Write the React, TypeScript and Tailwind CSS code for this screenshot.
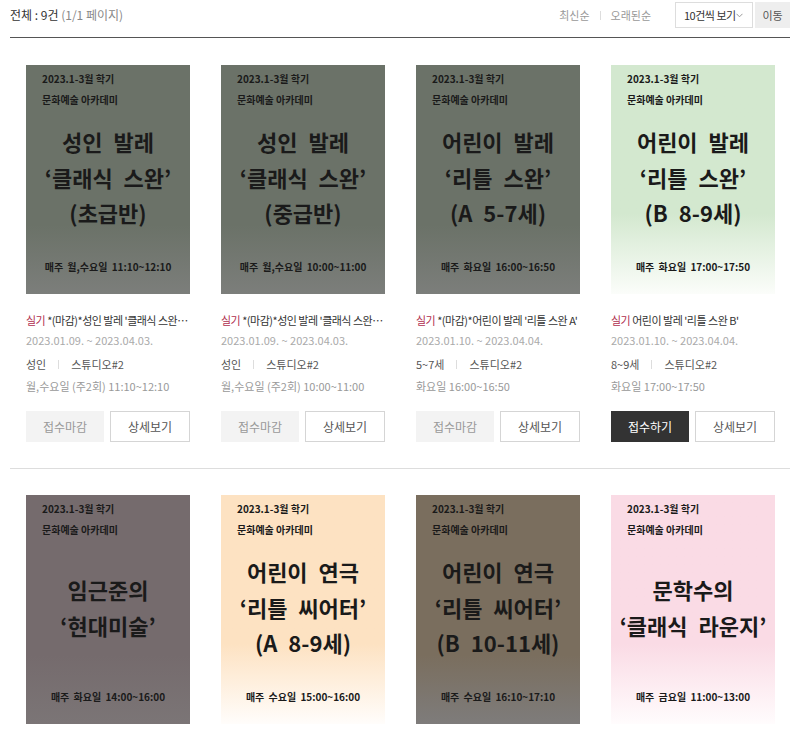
import React from 'react';

type Lecture = {
  year: string;
  lines: string[];
  schedule: string;
  bg: string;
  title: string;
  closed: boolean;
  period: string;
  target: string;
  time: string;
};

const lectures: Lecture[] = [
  {
    year: '2023.1-3월 학기',
    lines: ['성인 발레', '‘클래식 스완’', '(초급반)'],
    schedule: '매주 월,수요일 11:10~12:10',
    bg: 'bg-gradient-to-b from-[#6b7268] from-70% to-[#7c7e7b]',
    title: "*(마감)*성인 발레 '클래식 스완' (초급반)",
    closed: true,
    period: '2023.01.09. ~ 2023.04.03.',
    target: '성인',
    time: '월,수요일 (주2회) 11:10~12:10',
  },
  {
    year: '2023.1-3월 학기',
    lines: ['성인 발레', '‘클래식 스완’', '(중급반)'],
    schedule: '매주 월,수요일 10:00~11:00',
    bg: 'bg-gradient-to-b from-[#6b7268] from-70% to-[#7c7e7b]',
    title: "*(마감)*성인 발레 '클래식 스완' (중급반)",
    closed: true,
    period: '2023.01.09. ~ 2023.04.03.',
    target: '성인',
    time: '월,수요일 (주2회) 10:00~11:00',
  },
  {
    year: '2023.1-3월 학기',
    lines: ['어린이 발레', '‘리틀 스완’', '(A 5-7세)'],
    schedule: '매주 화요일 16:00~16:50',
    bg: 'bg-gradient-to-b from-[#6b7268] from-70% to-[#7c7e7b]',
    title: "*(마감)*어린이 발레 '리틀 스완 A'",
    closed: true,
    period: '2023.01.10. ~ 2023.04.04.',
    target: '5~7세',
    time: '화요일 16:00~16:50',
  },
  {
    year: '2023.1-3월 학기',
    lines: ['어린이 발레', '‘리틀 스완’', '(B 8-9세)'],
    schedule: '매주 화요일 17:00~17:50',
    bg: 'bg-gradient-to-b from-[#d3e8cf] from-65% to-[#fbfdfa]',
    title: "어린이 발레 '리틀 스완 B'",
    closed: false,
    period: '2023.01.10. ~ 2023.04.04.',
    target: '8~9세',
    time: '화요일 17:00~17:50',
  },
  {
    year: '2023.1-3월 학기',
    lines: ['임근준의', '‘현대미술’'],
    schedule: '매주 화요일 14:00~16:00',
    bg: 'bg-gradient-to-b from-[#756b6d] from-70% to-[#7b7576]',
    title: "임근준의 '현대미술'",
    closed: false,
    period: '2023.01.10. ~ 2023.03.28.',
    target: '성인',
    time: '화요일 14:00~16:00',
  },
  {
    year: '2023.1-3월 학기',
    lines: ['어린이 연극', '‘리틀 씨어터’', '(A 8-9세)'],
    schedule: '매주 수요일 15:00~16:00',
    bg: 'bg-gradient-to-b from-[#fde2c2] from-65% to-[#fffdfb]',
    title: "어린이 연극 '리틀 씨어터 A'",
    closed: false,
    period: '2023.01.11. ~ 2023.03.29.',
    target: '8~9세',
    time: '수요일 15:00~16:00',
  },
  {
    year: '2023.1-3월 학기',
    lines: ['어린이 연극', '‘리틀 씨어터’', '(B 10-11세)'],
    schedule: '매주 수요일 16:10~17:10',
    bg: 'bg-gradient-to-b from-[#7a6e5e] from-70% to-[#7e7c7b]',
    title: "어린이 연극 '리틀 씨어터 B'",
    closed: false,
    period: '2023.01.11. ~ 2023.03.29.',
    target: '10~11세',
    time: '수요일 16:10~17:10',
  },
  {
    year: '2023.1-3월 학기',
    lines: ['문학수의', '‘클래식 라운지’'],
    schedule: '매주 금요일 11:00~13:00',
    bg: 'bg-gradient-to-b from-[#fadbe5] from-65% to-[#fffcfd]',
    title: "문학수의 '클래식 라운지'",
    closed: false,
    period: '2023.01.13. ~ 2023.03.31.',
    target: '성인',
    time: '금요일 11:00~13:00',
  },
];

const font = { fontFamily: '"Noto Sans CJK KR", "Noto Sans", sans-serif' };

const Poster: React.FC<{ item: Lecture }> = ({ item }) => (
  <div className={`flex h-[229px] w-[164px] flex-col ${item.bg} text-[#1a1a1a]`}>
    <div className="px-4 pt-[3px] text-[10px] font-semibold leading-[21px]">
      <p>{item.year}</p>
      <p>문화예술 아카데미</p>
    </div>
    <div className="flex flex-1 flex-col items-center justify-center pb-[14px] text-[22px] font-bold leading-[35.5px] [word-spacing:6px]">
      {item.lines.map((l) => (
        <p key={l} className="whitespace-nowrap">{l}</p>
      ))}
    </div>
    <p className="pb-[20px] text-center text-[10px] font-semibold [word-spacing:2px]">{item.schedule}</p>
  </div>
);

const LectureCard: React.FC<{ item: Lecture }> = ({ item }) => (
  <div className="pl-4 pr-[15px]">
    <Poster item={item} />
    <div className="w-[164px]">
      <p className="mt-[17px] truncate text-[11px] leading-[18px] tracking-[-0.5px] text-[#333]">
        <span className="text-[#b0304f]">실기</span> {item.title}
      </p>
      <p className="mt-[3px] text-[11px] leading-[16px] text-[#aaa]">{item.period}</p>
      <p className="mt-[8px] flex items-center text-[11px] leading-[16px] text-[#555]">
        {item.target}
        <span className="mx-[12px] h-[9px] w-px bg-[#ddd]" />
        스튜디오#2
      </p>
      <p className="mt-[6px] text-[11px] leading-[16px] text-[#999]">{item.time}</p>
      <div className="mt-[17px] flex gap-[6px] text-[12px]">
        {item.closed ? (
          <button className="h-[31px] flex-1 bg-[#f3f3f3] text-[#999]">접수마감</button>
        ) : (
          <button className="h-[31px] flex-1 bg-[#333] text-white">접수하기</button>
        )}
        <button className="h-[31px] flex-1 border border-[#d5d5d5] bg-white text-[#555]">상세보기</button>
      </div>
    </div>
  </div>
);

export default function App() {
  return (
    <div className="h-[732px] overflow-hidden bg-white px-[10px]" style={font}>
      <div className="flex h-[38px] items-center justify-between border-b border-[#555]">
        <p className="pb-[8px] text-[12px] text-[#333]">
          전체 : 9건 <span className="text-[#888]">(1/1 페이지)</span>
        </p>
        <div className="flex items-center pb-[7px]">
          <span className="text-[11px] text-[#999]">최신순</span>
          <span className="mx-[10px] h-[9px] w-px bg-[#ddd]" />
          <span className="text-[11px] text-[#999]">오래된순</span>
          <div className="ml-[24px] flex h-[26px] w-[78px] items-center justify-between whitespace-nowrap border border-[#ddd] pl-[8px] pr-[9px] text-[11px] tracking-[-0.5px] text-[#333]">
            10건씩 보기
            <svg width="7" height="5" viewBox="0 0 7 5" fill="none" stroke="#999" strokeWidth="1">
              <path d="M0.5 0.8 3.5 3.8 6.5 0.8" />
            </svg>
          </div>
          <button className="ml-[2px] h-[26px] w-[35px] bg-[#eee] text-[11px] text-[#555]">이동</button>
        </div>
      </div>
      <div className="grid grid-cols-4 pt-[27px]">
        {lectures.slice(0, 4).map((l) => (
          <LectureCard key={l.title} item={l} />
        ))}
      </div>
      <div className="mt-[26px] border-t border-[#ddd]" />
      <div className="grid grid-cols-4 pt-[26px]">
        {lectures.slice(4).map((l) => (
          <LectureCard key={l.title} item={l} />
        ))}
      </div>
    </div>
  );
}
